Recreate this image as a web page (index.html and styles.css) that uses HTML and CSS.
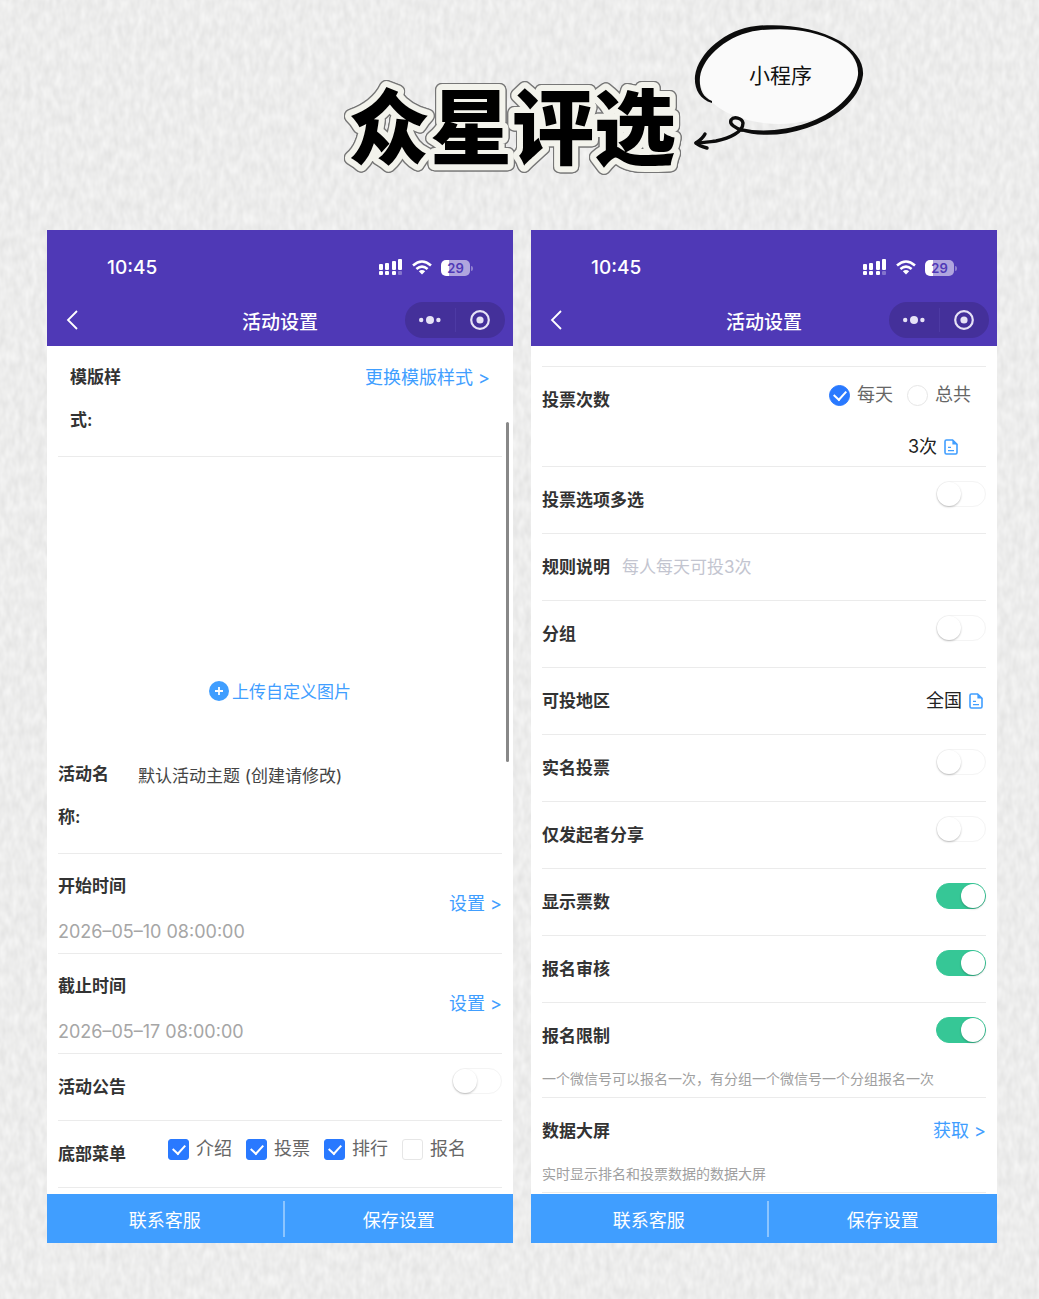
FILE: index.html
```html
<!DOCTYPE html>
<html lang="zh-CN">

<head>
	<meta charset="UTF-8" />
	<meta name="viewport" content="width=device-width, initial-scale=1.0">
	<title>众星评选</title>
	<link rel="stylesheet" href="styles.css">
</head>

<body>
	<!-- paper texture -->
	<svg class="paper" aria-hidden="true">
		<filter id="paperGrain" x="0" y="0" width="100%" height="100%" color-interpolation-filters="sRGB">
			<feTurbulence type="fractalNoise" baseFrequency="0.16 0.08" numOctaves="2" seed="8" />
			<feColorMatrix type="matrix" values="0.09 0 0 0 0.882  0.09 0 0 0 0.882  0.09 0 0 0 0.88  0 0 0 0 1" />
		</filter>
		<rect width="100%" height="100%" filter="url(#paperGrain)" />
	</svg>

	<!-- shared icons -->
	<svg class="icon-defs" aria-hidden="true">
		<symbol id="icon-signal" viewBox="0 0 24 17">
			<g fill="#fff">
				<rect x="0" y="5" width="4" height="6" rx="1" />
				<rect x="6" y="4" width="4" height="7" rx="1" />
				<rect x="13" y="2" width="4" height="9" rx="1" />
				<rect x="19" y="0" width="4" height="11" rx="1" />
				<rect x="0" y="12" width="4" height="4" rx="1" />
				<rect x="6" y="12" width="4" height="4" rx="1" />
				<rect x="13" y="12" width="4" height="4" rx="1" />
				<rect x="19" y="12" width="4" height="4" rx="1" opacity=".3" />
			</g>
		</symbol>
		<symbol id="icon-wifi" viewBox="0 0 20 15">
			<g fill="none" stroke="#fff" stroke-width="2.6">
				<path d="M1 5.4 Q10 -2.4 19 5.4" />
				<path d="M4.4 9 Q10 4.2 15.6 9" />
			</g>
			<path d="M6.8 11.2 Q10 8.6 13.2 11.2 L10 14.6 Z" fill="#fff" />
		</symbol>
		<symbol id="icon-back" viewBox="0 0 12 20">
			<path d="M11 1 L2 10 L11 19" fill="none" stroke="#fff" stroke-width="1.8" />
		</symbol>
		<symbol id="icon-more" viewBox="0 0 22 8">
			<g fill="#e6e2f6">
				<circle cx="2.2" cy="4" r="2.2" />
				<circle cx="11" cy="4" r="4" />
				<circle cx="19.4" cy="4" r="2.2" />
			</g>
		</symbol>
		<symbol id="icon-target" viewBox="0 0 20 20">
			<circle cx="10" cy="10" r="8.8" fill="none" stroke="#e6e2f6" stroke-width="2.2" />
			<circle cx="10" cy="10" r="3.6" fill="#e6e2f6" />
		</symbol>
		<symbol id="icon-doc" viewBox="0 0 14 16">
			<path d="M8.6 1 H2.4 Q1 1 1 2.4 V13.6 Q1 15 2.4 15 H11.6 Q13 15 13 13.6 V5.4 Z" fill="none" stroke="#409eff" stroke-width="1.6" />
			<path d="M8.4 1 V5.6 H13 Z" fill="#409eff" />
			<path d="M4 8.4 H7 M4 11.6 H10" stroke="#409eff" stroke-width="1.4" />
		</symbol>
	</svg>

	<header class="hero">
		<h1 class="hero-title">
			<svg viewBox="0 0 360 130">
				<text class="title-text" x="180" y="98" text-anchor="middle">众星评选</text>
			</svg>
		</h1>
		<div class="bubble">
			<svg class="bubble-shape" viewBox="0 0 200 160" aria-hidden="true">
				<ellipse cx="99" cy="66" rx="80" ry="48" fill="#fafafa" />
				<path d="M32 93 C19 89 14 78 15 66 C18 43 46 19 76 16 C104 13 138 18 160 31 C175 40 184 52 183 65 C180 91 152 110 127 118 C103 126 80 127 60 121 L61 118 C82 123 106 120 127 113 C153 104 175 86 178 65 C179 51 171 41 158 33 C136 20 106 17 78 20.500 C49 24 23 46 20 67 C19 78 22 87 32 91 Z" fill="#0c0c0c" />
				<g fill="none" stroke="#0c0c0c" stroke-width="3.400" stroke-linecap="round" stroke-linejoin="round">
					<path d="M62 120 C55 118 49 114 51 110 C54 106 62 108 63 113 C63 122 50 128 36 131 C28 132 22 133 16 133" />
					<path d="M25 124 C23 128 19 131 16 133 C19 136 23 137 27 138" />
				</g>
			</svg>
			<span class="bubble-text">小程序</span>
		</div>
	</header>

	<main class="phones">
		<section class="phone">
			<div class="phone-head">
				<div class="status-bar">
					<span class="time">10:45</span>
					<div class="status-icons">
						<svg class="signal"><use href="#icon-signal" /></svg>
						<svg class="wifi"><use href="#icon-wifi" /></svg>
						<span class="battery">29</span>
					</div>
				</div>
				<div class="nav-bar">
					<button class="back" aria-label="返回"><svg><use href="#icon-back" /></svg></button>
					<h2 class="nav-title">活动设置</h2>
					<div class="capsule">
						<button class="capsule-btn" aria-label="更多"><svg class="more"><use href="#icon-more" /></svg></button>
						<button class="capsule-btn" aria-label="关闭"><svg class="target"><use href="#icon-target" /></svg></button>
					</div>
				</div>
			</div>

			<div class="phone-body">
				<div class="row row-tall row-template">
					<span class="label label-narrow">模版样式:</span>
					<a href="#" class="link">更换模版样式 &gt;</a>
				</div>

				<div class="upload">
					<button class="upload-btn">
						<svg class="plus" viewBox="0 0 20 20"><circle cx="10" cy="10" r="10" fill="#409eff" /><path d="M10 6 V14 M6 10 H14" stroke="#fff" stroke-width="1.8" /></svg>
						上传自定义图片
					</button>
				</div>

				<div class="row row-tall">
					<label class="label label-narrow" for="activityName">活动名称:</label>
					<input type="text" class="text-input" id="activityName" value="默认活动主题 (创建请修改)">
				</div>

				<div class="row row-date">
					<div>
						<span class="label">开始时间</span>
						<p class="date">2026–05–10 08:00:00</p>
					</div>
					<a href="#" class="link">设置 &gt;</a>
				</div>

				<div class="row row-date">
					<div>
						<span class="label">截止时间</span>
						<p class="date">2026–05–17 08:00:00</p>
					</div>
					<a href="#" class="link">设置 &gt;</a>
				</div>

				<div class="row">
					<label class="label" for="notice">活动公告</label>
					<input type="checkbox" class="switch" id="notice">
				</div>

				<div class="row row-menu">
					<span class="label">底部菜单</span>
					<div class="options">
						<label class="option"><input type="checkbox" class="tick" checked>介绍</label>
						<label class="option"><input type="checkbox" class="tick" checked>投票</label>
						<label class="option"><input type="checkbox" class="tick" checked>排行</label>
						<label class="option"><input type="checkbox" class="tick">报名</label>
					</div>
				</div>
			</div>

			<div class="actions">
				<button class="action">联系客服</button>
				<button class="action">保存设置</button>
			</div>
			<div class="scrollbar"></div>
		</section>

		<section class="phone">
			<div class="phone-head">
				<div class="status-bar">
					<span class="time">10:45</span>
					<div class="status-icons">
						<svg class="signal"><use href="#icon-signal" /></svg>
						<svg class="wifi"><use href="#icon-wifi" /></svg>
						<span class="battery">29</span>
					</div>
				</div>
				<div class="nav-bar">
					<button class="back" aria-label="返回"><svg><use href="#icon-back" /></svg></button>
					<h2 class="nav-title">活动设置</h2>
					<div class="capsule">
						<button class="capsule-btn" aria-label="更多"><svg class="more"><use href="#icon-more" /></svg></button>
						<button class="capsule-btn" aria-label="关闭"><svg class="target"><use href="#icon-target" /></svg></button>
					</div>
				</div>
			</div>

			<div class="phone-body">
				<div class="row-end"></div>

				<div class="row row-votes">
					<span class="label">投票次数</span>
					<div class="votes">
						<div class="options">
							<label class="option"><input type="radio" name="voteCycle" class="tick tick-round" checked>每天</label>
							<label class="option"><input type="radio" name="voteCycle" class="tick tick-round">总共</label>
						</div>
						<button class="value">3次<svg class="doc"><use href="#icon-doc" /></svg></button>
					</div>
				</div>

				<div class="row">
					<label class="label" for="multi">投票选项多选</label>
					<input type="checkbox" class="switch" id="multi">
				</div>

				<div class="row row-rule">
					<label class="label" for="rule">规则说明</label>
					<input type="text" class="text-input" id="rule" placeholder="每人每天可投3次">
				</div>

				<div class="row">
					<label class="label" for="group">分组</label>
					<input type="checkbox" class="switch" id="group">
				</div>

				<div class="row">
					<span class="label">可投地区</span>
					<button class="value">全国<svg class="doc"><use href="#icon-doc" /></svg></button>
				</div>

				<div class="row">
					<label class="label" for="realName">实名投票</label>
					<input type="checkbox" class="switch" id="realName">
				</div>

				<div class="row">
					<label class="label" for="ownerShare">仅发起者分享</label>
					<input type="checkbox" class="switch" id="ownerShare">
				</div>

				<div class="row">
					<label class="label" for="showVotes">显示票数</label>
					<input type="checkbox" class="switch" id="showVotes" checked>
				</div>

				<div class="row">
					<label class="label" for="review">报名审核</label>
					<input type="checkbox" class="switch" id="review" checked>
				</div>

				<div class="row row-hint">
					<label class="label" for="limit">报名限制</label>
					<input type="checkbox" class="switch" id="limit" checked>
					<p class="hint">一个微信号可以报名一次，有分组一个微信号一个分组报名一次</p>
				</div>

				<div class="row row-hint">
					<span class="label">数据大屏</span>
					<a href="#" class="link">获取 &gt;</a>
					<p class="hint">实时显示排名和投票数据的数据大屏</p>
				</div>
			</div>

			<div class="actions">
				<button class="action">联系客服</button>
				<button class="action">保存设置</button>
			</div>
		</section>
	</main>
</body>

</html>
```
FILE: styles.css
```css
* {
	box-sizing: border-box;
}

body {
	font-family: Inter, "Noto Sans CJK SC", sans-serif;
	font-size: 17px;
	background-color: #ebebeb;
	color: #333;
	margin: 0;
	min-height: 100vh;
	padding-bottom: 55px;
	position: relative;
}

h1,
h2,
p {
	margin: 0;
}

button {
	font: inherit;
	border: none;
	background: none;
	padding: 0;
	cursor: pointer;
}

.paper {
	position: absolute;
	top: 0;
	left: 0;
	width: 100%;
	height: 100%;
	z-index: -1;
}

.icon-defs {
	position: absolute;
	width: 0;
	height: 0;
}

/* title */
.hero {
	position: relative;
	height: 230px;
	display: flex;
	justify-content: center;
	padding: 60px 16px 0 0;
}

.hero-title {
	width: 360px;
	height: 130px;
	font-size: 82px;
}

.hero-title svg {
	display: block;
	width: 100%;
	height: 100%;
	overflow: visible;
	filter: drop-shadow(1px 0 0 #777) drop-shadow(-1px 0 0 #777) drop-shadow(0 1px 0 #777) drop-shadow(0 -1px 0 #777);
}

.title-text {
	font-family: "Noto Sans CJK SC", sans-serif;
	font-size: 82px;
	font-weight: 900;
	fill: #000;
	stroke: #f3f3ec;
	stroke-width: 12px;
	stroke-linejoin: round;
	paint-order: stroke;
}

.bubble {
	position: absolute;
	top: 10px;
	left: calc(50% + 160px);
	width: 200px;
	height: 160px;
}

.bubble-shape {
	width: 100%;
	height: 100%;
}

.bubble-text {
	position: absolute;
	top: 50px;
	left: 0;
	width: 100%;
	padding-left: 2px;
	text-align: center;
	font-size: 21px;
	line-height: 32px;
	color: #111;
}

/* phones */
.phones {
	display: flex;
	gap: 18px;
	padding: 0 42px 0 47px;
}

.phone {
	position: relative;
	flex: 1;
	display: flex;
	flex-direction: column;
	background-color: #fff;
}

.phone-head {
	background-color: #4f39b6;
	color: #fff;
	padding-bottom: 8px;
}

.status-bar {
	display: flex;
	justify-content: space-between;
	align-items: center;
	height: 72px;
	padding: 3px 40px 0 60px;
}

.time {
	font-size: 19px;
	font-weight: 500;
}

.status-icons {
	display: flex;
	align-items: center;
	gap: 9px;
}

.signal {
	width: 24px;
	height: 17px;
}

.wifi {
	width: 20px;
	height: 15px;
}

.battery {
	position: relative;
	width: 29px;
	height: 16px;
	margin-right: 3px;
	border-radius: 5px;
	background: linear-gradient(90deg, #fff 29%, #b0a5de 29%);
	color: #4f39b6;
	font-size: 13px;
	font-weight: 600;
	line-height: 16px;
	text-align: center;
}

.battery::after {
	content: "";
	position: absolute;
	top: 6px;
	right: -3px;
	width: 2px;
	height: 5px;
	border-radius: 0 2px 2px 0;
	background-color: #8f80cf;
}

.nav-bar {
	display: grid;
	grid-template-columns: 100px 1fr 100px;
	align-items: center;
	height: 36px;
	padding: 0 8px;
}

.back {
	width: 32px;
	height: 36px;
}

.back svg {
	display: block;
	width: 12px;
	height: 20px;
	margin-left: 11px;
}

.nav-title {
	font-size: 19px;
	font-weight: 500;
	text-align: center;
}

.capsule {
	display: flex;
	align-items: center;
	height: 36px;
	border-radius: 18px;
	background-color: #44309a;
}

.capsule-btn {
	flex: 1;
	display: flex;
	justify-content: center;
	align-items: center;
	height: 24px;
}

.capsule-btn + .capsule-btn {
	border-left: 1px solid #4d3aa4;
}

.more {
	width: 22px;
	height: 8px;
}

.target {
	width: 20px;
	height: 20px;
}

.phone-body {
	flex: 1;
	padding: 0 11px 1px;
}

/* setting rows */
.row {
	display: flex;
	justify-content: space-between;
	align-items: flex-start;
	min-height: 67px;
	border-bottom: 1px solid #ebebeb;
}

.row-end {
	height: 21px;
	border-bottom: 1px solid #ebebeb;
}

.label {
	font-weight: 600;
	line-height: 66px;
}

.link {
	color: #409eff;
	font-size: 18px;
	line-height: 66px;
	text-decoration: none;
}

.row-tall {
	padding: 10px 0 14px;
}

.row-tall .label,
.row-tall .link {
	line-height: 43px;
}

.row-template {
	padding-left: 12px;
	padding-right: 12px;
}

.label-narrow {
	flex: none;
	width: 60px;
	margin-right: 20px;
	word-break: break-all;
}

.text-input {
	flex: 1;
	min-width: 0;
	height: 43px;
	padding: 0;
	border: none;
	outline: none;
	background: none;
	color: #444;
	font: inherit;
}

.text-input::placeholder {
	color: #c3c5d0;
	opacity: 1;
}

.upload {
	display: flex;
	justify-content: center;
	height: 286px;
	padding-top: 212px;
}

.upload-btn {
	display: flex;
	align-items: center;
	gap: 3px;
	height: 43px;
	color: #409eff;
}

.plus {
	width: 20px;
	height: 20px;
}

.row-date {
	min-height: 100px;
	align-items: center;
}

.row-date .label {
	display: block;
	line-height: 48px;
	margin-top: 8px;
}

.date {
	color: #a6a6a6;
	font-size: 18px;
	line-height: 43px;
}

.row-menu {
	justify-content: flex-start;
	gap: 42px;
}

.options {
	display: flex;
	gap: 14px;
	padding-top: 14px;
}

.option {
	display: flex;
	align-items: center;
	gap: 7px;
	color: #666;
	font-size: 18px;
	line-height: 28px;
}

.tick {
	appearance: none;
	display: grid;
	place-items: center;
	width: 21px;
	height: 21px;
	margin: 0;
	border: 1px solid #e6e6e6;
	border-radius: 3px;
	background-color: #fff;
}

.tick:checked {
	border-color: #2979ff;
	background-color: #2979ff;
}

.tick:checked::after {
	content: "";
	width: 6px;
	height: 10px;
	margin-bottom: 3px;
	border: solid #fff;
	border-width: 0 2px 2px 0;
	transform: rotate(42deg);
}

.tick-round {
	border-radius: 50%;
}

.row-votes {
	min-height: 100px;
}

.votes {
	display: flex;
	flex-direction: column;
	align-items: flex-end;
}

.votes .options {
	padding-right: 15px;
}

.votes .value {
	line-height: 28px;
	margin-top: 24px;
	padding-right: 28px;
}

.value {
	display: flex;
	align-items: center;
	gap: 7px;
	padding-right: 3px;
	color: #222;
	font-size: 18px;
	line-height: 66px;
}

.doc {
	width: 14px;
	height: 16px;
}

.row-rule {
	gap: 12px;
}

.row-rule .text-input {
	height: 66px;
}

.switch {
	appearance: none;
	position: relative;
	width: 50px;
	height: 26px;
	margin: 14px 0 0;
	border: 1px solid #f4f4f4;
	border-radius: 13px;
	background-color: #fff;
	cursor: pointer;
}

.switch::after {
	content: "";
	position: absolute;
	top: 0;
	left: 0;
	width: 24px;
	height: 24px;
	border-radius: 50%;
	background-color: #fff;
	box-shadow: 0 1px 2px rgba(0, 0, 0, 0.25);
}

.switch:checked {
	border-color: #36c796;
	background-color: #36c796;
}

.switch:checked::after {
	left: 24px;
}

.row-hint {
	flex-wrap: wrap;
	min-height: 95px;
}

.hint {
	width: 100%;
	color: #a0a0a0;
	font-size: 14px;
	line-height: 20px;
	padding-bottom: 8px;
}

/* bottom buttons */
.actions {
	display: flex;
	align-items: center;
	height: 49px;
	background-color: #409eff;
}

.action {
	width: 49%;
	height: 36px;
	color: #fff;
	font-size: 18px;
}

.action:first-child {
	width: 51%;
	border-right: 2px solid #8cc5ff;
}

.scrollbar {
	position: absolute;
	top: 192px;
	right: 4px;
	width: 3px;
	height: 340px;
	border-radius: 2px;
	background-color: #888;
}
```
